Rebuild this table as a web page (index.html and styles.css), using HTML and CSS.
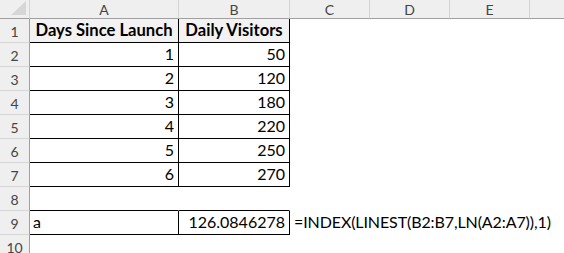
FILE: index.html
```html
<!DOCTYPE html>
<html>
<head>
<meta charset="utf-8">
<link rel="stylesheet" href="styles.css">
</head>
<body>
<div class="sheet">
  <div class="hd corner"><span class="tri"></span></div>
  <div class="hd col">A</div>
  <div class="hd col">B</div>
  <div class="hd col">C</div>
  <div class="hd col">D</div>
  <div class="hd col">E</div>
  <div class="hd col last"></div>

  <div class="hd rowh">1</div>
  <div class="c bx fill b">Days Since Launch</div>
  <div class="c bx fill b">Daily Visitors</div>
  <div class="c"></div><div class="c"></div><div class="c"></div><div class="c"></div>

  <div class="hd rowh">2</div>
  <div class="c bx r">1</div>
  <div class="c bx r">50</div>
  <div class="c"></div><div class="c"></div><div class="c"></div><div class="c"></div>

  <div class="hd rowh">3</div>
  <div class="c bx r">2</div>
  <div class="c bx r">120</div>
  <div class="c"></div><div class="c"></div><div class="c"></div><div class="c"></div>

  <div class="hd rowh">4</div>
  <div class="c bx r">3</div>
  <div class="c bx r">180</div>
  <div class="c"></div><div class="c"></div><div class="c"></div><div class="c"></div>

  <div class="hd rowh">5</div>
  <div class="c bx r">4</div>
  <div class="c bx r">220</div>
  <div class="c"></div><div class="c"></div><div class="c"></div><div class="c"></div>

  <div class="hd rowh">6</div>
  <div class="c bx r">5</div>
  <div class="c bx r">250</div>
  <div class="c"></div><div class="c"></div><div class="c"></div><div class="c"></div>

  <div class="hd rowh">7</div>
  <div class="c bx r">6</div>
  <div class="c bx r">270</div>
  <div class="c"></div><div class="c"></div><div class="c"></div><div class="c"></div>

  <div class="hd rowh">8</div>
  <div class="c bb"></div>
  <div class="c bb"></div>
  <div class="c"></div><div class="c"></div><div class="c"></div><div class="c"></div>

  <div class="hd rowh">9</div>
  <div class="c bx">a</div>
  <div class="c bx r">126.0846278</div>
  <div class="c over">=INDEX(LINEST(B2:B7,LN(A2:A7)),1)</div>
  <div class="c"></div><div class="c"></div><div class="c"></div>

  <div class="hd rowh">10</div>
  <div class="c"></div>
  <div class="c"></div>
  <div class="c"></div><div class="c"></div><div class="c"></div><div class="c"></div>
</div>
</body>
</html>
```

FILE: styles.css
```css
html, body {
  margin: 0;
  padding: 0;
  background: #ffffff;
  overflow: hidden;
}

.sheet {
  display: grid;
  grid-template-columns: 30px 149px 111px 80px 80px 80px 34px;
  grid-template-rows: 19px repeat(10, 24px);
  width: 564px;
  font-family: Lato, "Open Sans", sans-serif;
  font-size: 16px;
  color: #000;
}

.hd {
  box-sizing: border-box;
  background: #efefef;
  color: #444;
  font-size: 14px;
  display: flex;
  align-items: center;
  justify-content: center;
}

.corner {
  position: relative;
  border-right: 1px solid #d4d4d4;
  border-bottom: 1px solid #a0a0a0;
}

.tri {
  position: absolute;
  right: 3px;
  bottom: 3px;
  width: 0;
  height: 0;
  border-left: 15px solid transparent;
  border-bottom: 14px solid #d6d6d6;
}

.col {
  border-right: 1px solid #d4d4d4;
  border-bottom: 1px solid #a0a0a0;
  padding-top: 1px;
}

.col.last {
  border-right: none;
}

.rowh {
  border-right: 1px solid #a0a0a0;
  border-bottom: 1px solid #d6d6d6;
  padding-top: 2px;
}

.c {
  box-sizing: border-box;
  border-right: 1px solid transparent;
  border-bottom: 1px solid transparent;
  display: flex;
  align-items: flex-end;
  padding: 0 4px 2px 3px;
  line-height: 20px;
  white-space: nowrap;
}

.bx {
  border-right-color: #000;
  border-bottom-color: #000;
}

.bb {
  border-bottom-color: #000;
}

.fill {
  background: #f2f2f2;
}

.b {
  font-weight: 700;
  font-size: 16.6px;
  justify-content: center;
  padding: 0 2px 2px 2px;
}

.r {
  justify-content: flex-end;
}

.over {
  overflow: visible;
  padding-left: 4px;
  letter-spacing: -0.1px;
}
```
